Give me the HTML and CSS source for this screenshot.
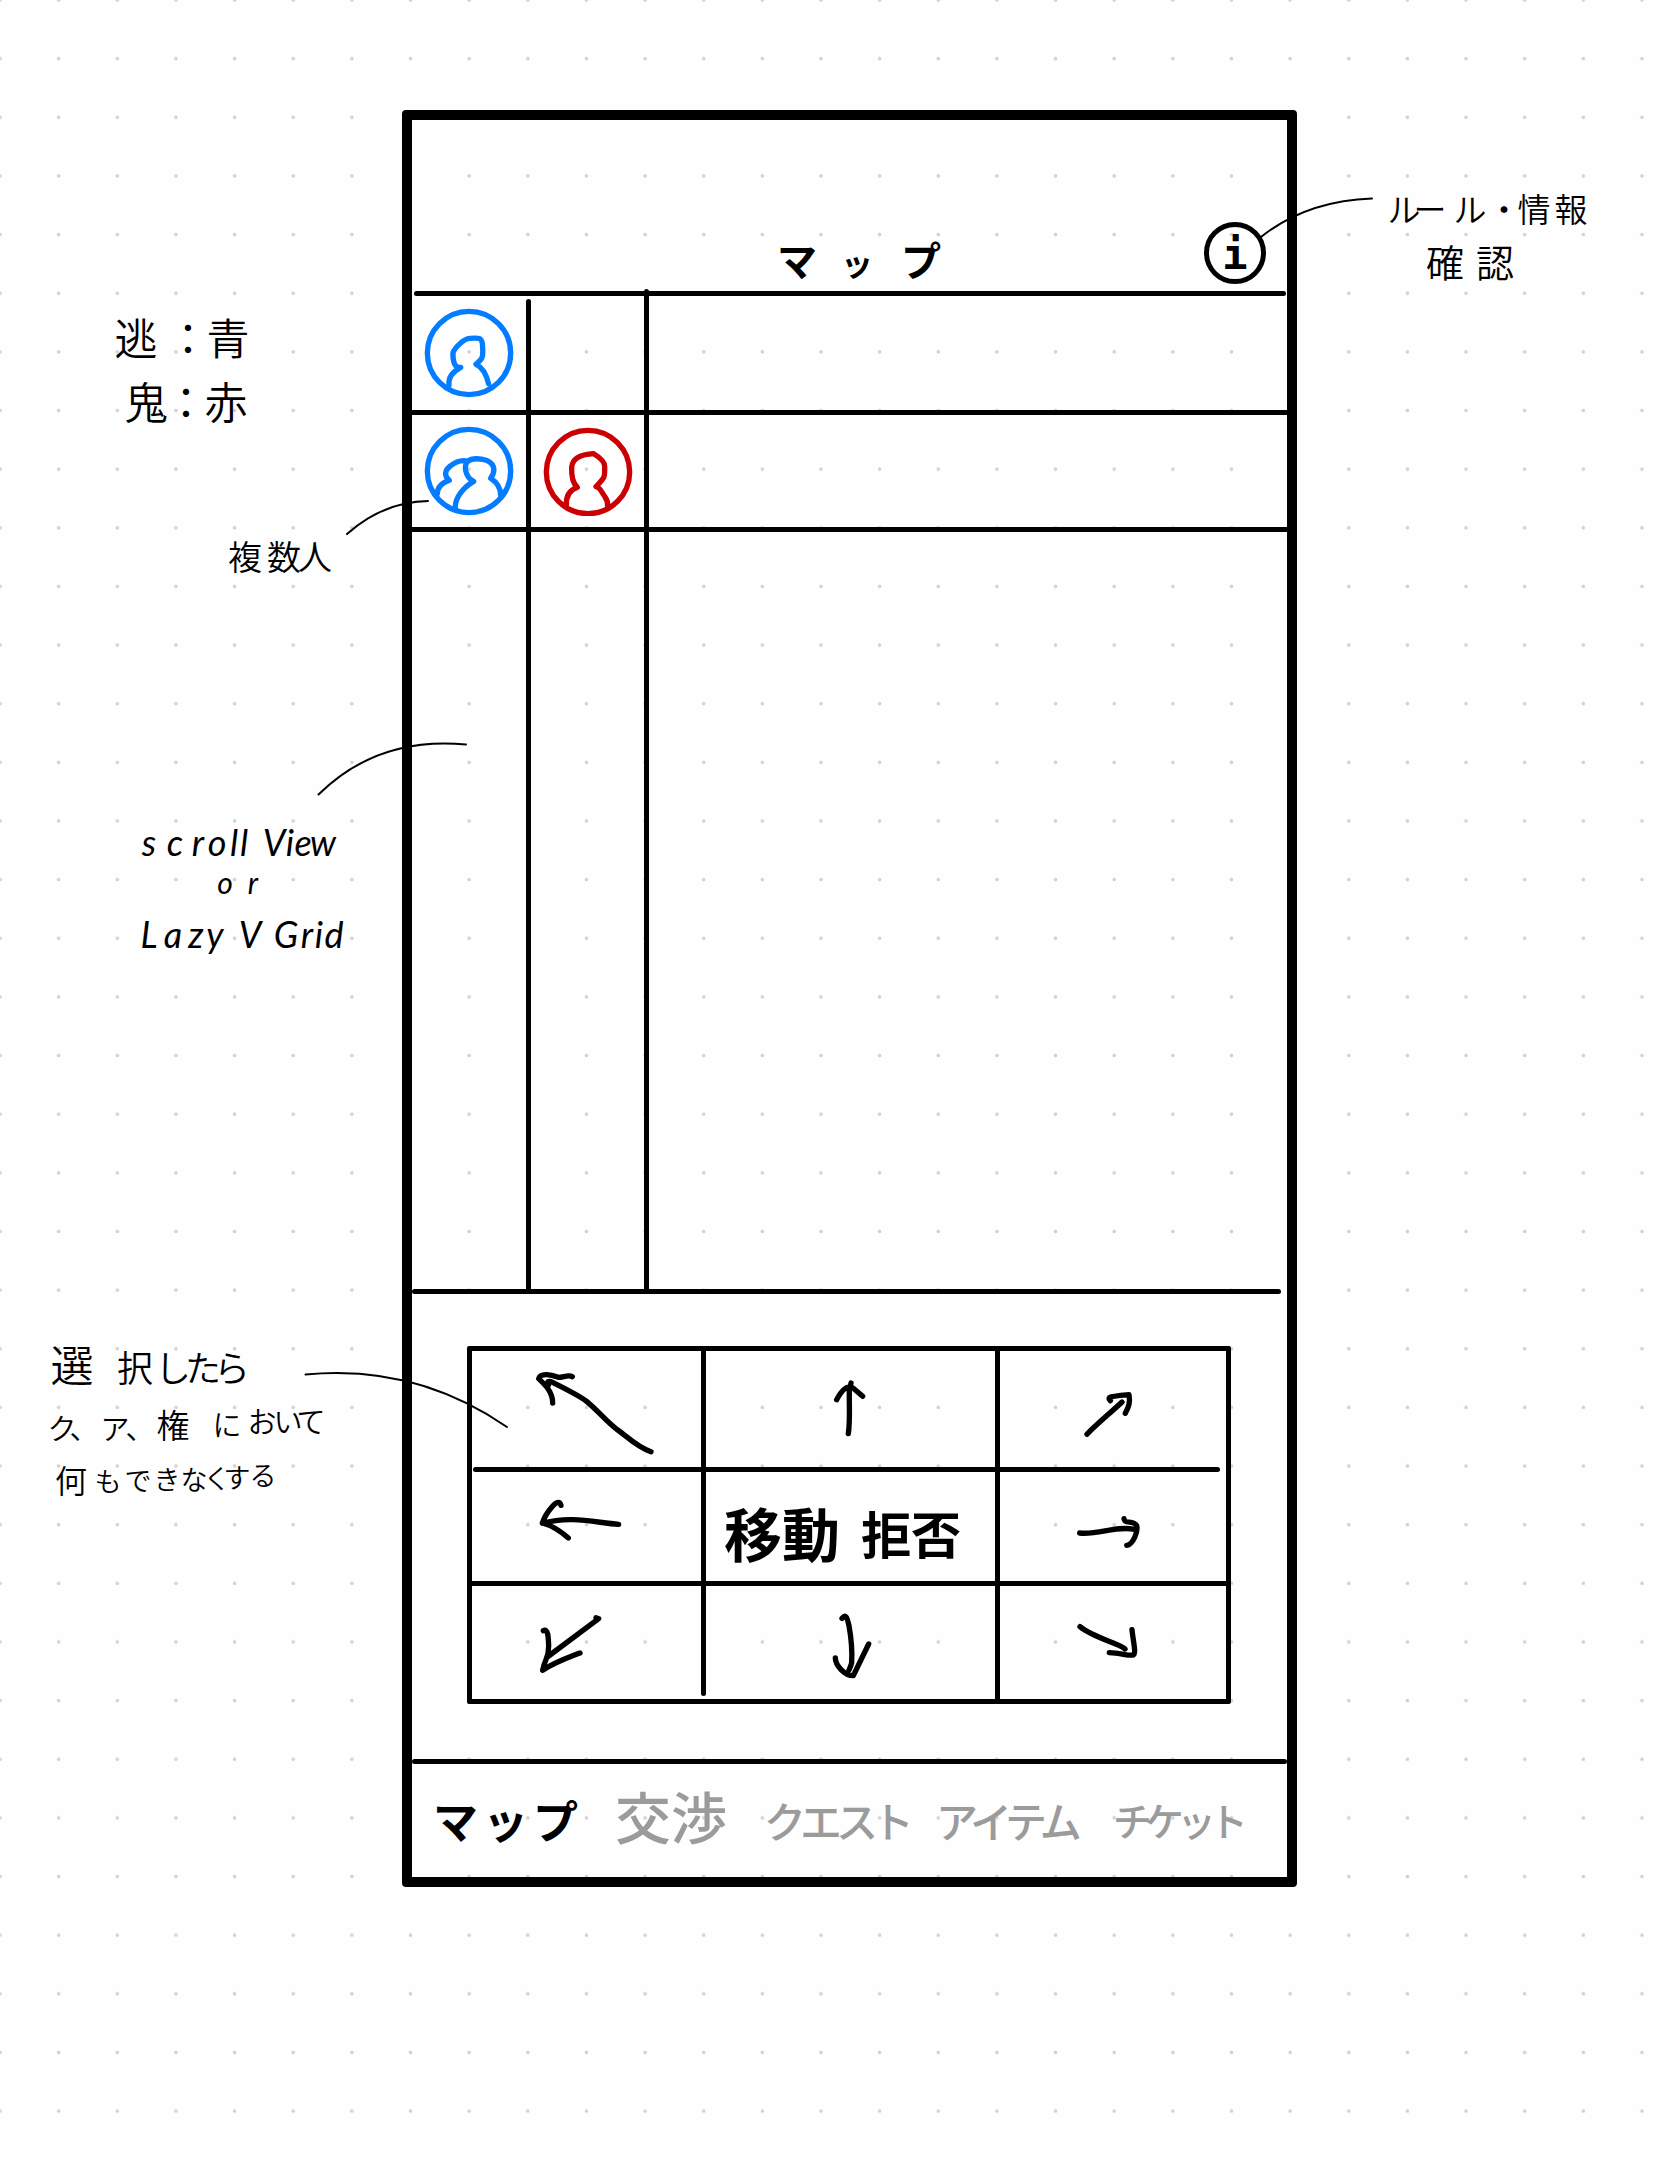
FILE: index.html
```html
<!DOCTYPE html>
<html lang="ja">
<head>
<meta charset="utf-8">
<title>マップ</title>
<link rel="stylesheet" href="styles.css">
</head>
<body>
<main class="canvas">
  <section class="phone">
    <header class="header">
      <h1 class="title">マ<span class="small-tsu">ッ</span>プ</h1>
      <span class="info"><span class="info-mark">i</span></span>
    </header>
    <div class="rule rule-header"></div>

    <div class="map">
      <div class="cell cell-a1">
        <svg class="avatar blue" viewBox="133 656 270 270"><circle cx="268" cy="791" r="125"/><path d="M208 887C205 862 223 845 243 834C224 838 219 814 220 790C225 776 252 748 270 747C300 744 309 744 309 777C311 807 306 810 289 825C309 834 321 858 327 884"/></svg>
      </div>
      <div class="cell cell-a2">
        <svg class="avatar blue" viewBox="133 1008 270 270"><circle cx="268" cy="1143" r="125"/><path d="M173 1212C172 1190 190 1178 209 1171C191 1157 197 1139 212 1128C226 1116 243 1109 264 1113M227 1255C225 1226 249 1193 282 1174C254 1160 253 1125 264 1114C276 1104 292 1105 309 1108C345 1115 350 1141 333 1165C353 1178 363 1195 363 1216"/></svg>
      </div>
      <div class="cell cell-b2">
        <svg class="avatar red" viewBox="486 1010 270 270"><circle cx="621" cy="1148" r="125"/><path d="M556 1249C554 1219 567 1202 589 1194C574 1181 571 1158 572 1133C575 1105 602 1095 638 1093C653 1102 671 1115 671 1131C672 1166 671 1165 645 1192C659 1194 663 1212 671 1221C679 1232 681 1241 680 1252"/></svg>
      </div>
      <i class="row-line row-1"></i>
      <i class="row-line row-2"></i>
      <i class="col-line col-1"></i>
      <i class="col-line col-2"></i>
    </div>
    <div class="rule rule-map"></div>

    <div class="controls">
      <div class="pad">
        <svg class="arrow p11" viewBox="96 243 687 348"><path d="M633 545C588 530 557 495 528 476C499 454 470 418 437 392C412 374 347 342 331 334C320 333 322 341 325 345M338 399C338 366 317 346 296 326C301 307 334 314 355 322C370 322 386 313 397 320"/></svg>
        <svg class="arrow p12" viewBox="798 243 867 348"><path d="M1225 491C1231 450 1227 400 1228 361L1233 339M1190 389C1204 363 1220 343 1239 354L1268 379"/></svg>
        <svg class="arrow p13" viewBox="480 243 678 348"><path d="M741 493C760 471 819 422 846 396M811 392C798 380 816 379 867 374C871 396 867 409 856 430"/></svg>
        <svg class="arrow p21" viewBox="96 606 687 327"><path d="M536 763C470 759 395 735 307 760M363 706C355 675 315 734 307 759C338 767 362 784 385 804"/></svg>
        <div class="refuse p22"><span class="refuse-a">移動</span><span class="refuse-b">拒否</span></div>
        <svg class="arrow p23" viewBox="480 606 678 327"><path d="M719 789C777 795 826 766 884 778M852 746C854 765 879 748 890 767C895 784 879 824 860 826"/></svg>
        <svg class="arrow p31" viewBox="96 948 687 339"><path d="M468 1043L476 1046L322 1161M310 1082C325 1074 325 1105 326 1128C326 1167 316 1161 308 1201C345 1176 387 1162 420 1149"/></svg>
        <svg class="arrow p32" viewBox="798 948 867 339"><path d="M1206 1045C1219 1028 1222 1048 1227 1067C1233 1100 1237 1140 1235 1178C1234 1185 1230 1193 1227 1200M1186 1164C1186 1184 1212 1217 1240 1217L1286 1122"/></svg>
        <svg class="arrow p33" viewBox="480 948 678 339"><path d="M720 1070C760 1103 843 1123 855 1137M876 1079C880 1118 889 1149 880 1155C866 1158 842 1149 808 1148"/></svg>
        <i class="pad-line h1"></i>
        <i class="pad-line h2"></i>
        <i class="pad-line v1"></i>
        <i class="pad-line v2"></i>
      </div>
    </div>
    <div class="rule rule-tabs"></div>

    <nav class="tabs">
      <span class="tab tab-map">マップ</span>
      <span class="tab tab-talk">交渉</span>
      <span class="tab tab-quest">クエスト</span>
      <span class="tab tab-item">アイテム</span>
      <span class="tab tab-ticket">チケット</span>
    </nav>
  </section>

  <svg class="notes" viewBox="0 0 1668 2157">
    <g class="leader">
      <path d="M1261 237Q1306 201 1372 198.500"/>
      <path d="M347 534Q383 502 428 501"/>
      <path d="M318.500 794.500Q378 736 466 744.500"/>
      <path d="M305.500 1374.500Q416 1364 507 1427"/>
    </g>
    <text class="n33" x="1404 1430 1470 1504 1534 1571" y="222">ルール・情報</text>
    <text class="n37" x="1445 1495" y="277">確認</text>
    <text class="n46" x="136 188 228" y="355">逃：青</text>
    <text class="n46" x="146 186 226" y="419">鬼：赤</text>
    <text class="n34" x="245 284 315" y="570">複数人</text>
    <text class="latin" x="149 175 198 217 234 244 258 274 290 303 323" y="856">scroll View</text>
    <text class="latin latin-or" x="225 253" y="894">or</text>
    <text class="latin" x="149 173 196 215 232 250 268 286 307 319 334" y="948">Lazy V Grid</text>
    <text class="n36" x="72 135 173 203 232" y="1382"><tspan class="n42">選</tspan>択したら</text>
    <text class="n29" x="62 84 115 140 173 200 227 262 288 311" y="1440 1440 1440 1440 1438 1438 1436 1433 1433 1433">ク、ア、<tspan class="n33">権</tspan> において</text>
    <text class="n27" x="71 108 138 167 194 217 237 263" y="1493 1492 1491 1490 1490 1489 1488 1486"><tspan class="n31">何</tspan>もできなくする</text>
  </svg>
</main>
</body>
</html>
```
FILE: styles.css
```css
* { box-sizing: border-box; }

body {
  margin: 0;
  background: #fefefe;
  color: #000;
  font-family: "Noto Sans CJK JP", sans-serif;
}

.canvas {
  position: relative;
  width: 1668px;
  height: 2157px;
  padding: 110px 0 0 402px;
  overflow: hidden;
  background-image: radial-gradient(circle, #d2d2d2 0, #d2d2d2 1.4px, transparent 2.2px);
  background-size: 58.65px 58.65px;
  background-position: -29.3px -29.3px;
}

.phone {
  display: flex;
  flex-direction: column;
  width: 895px;
  height: 1777px;
  border: 10px solid #000;
  border-radius: 4px;
}

.header {
  display: flex;
  flex: none;
  align-items: flex-end;
  justify-content: space-between;
  height: 171px;
  padding: 0 21px 7px 365px;
}

.title {
  margin: 0;
  font-size: 40px;
  font-weight: 700;
  line-height: 44px;
  letter-spacing: 22px;
}

.small-tsu {
  margin: 0 6px 0 2px;
  font-size: 32px;
}

.info {
  display: flex;
  align-items: center;
  justify-content: center;
  width: 62px;
  height: 62px;
  border: 5px solid #000;
  border-radius: 50%;
}

.info-mark {
  padding-top: 4px;
  font: 700 42px/50px "DejaVu Sans Mono", monospace;
}

.rule {
  flex: none;
  height: 5px;
  border-radius: 3px;
  background: #000;
}

.rule-header { margin: 0 1px 0 2px; }
.rule-map { margin-right: 6px; }

.map {
  display: grid;
  flex: none;
  grid-template-columns: 114px 5px 113px 5px 1fr;
  grid-template-rows: 114px 5px 112px 5px 757px;
}

.cell {
  display: flex;
  align-items: center;
  justify-content: center;
}

.cell-a1 { grid-area: 1 / 1; }
.cell-a2 { grid-area: 3 / 1; }
.cell-b2 { grid-area: 3 / 3; }

.avatar {
  width: 90px;
  height: 90px;
  fill: none;
  stroke-width: 16;
  stroke-linecap: round;
  stroke-linejoin: round;
}

.blue { stroke: #037cff; }
.red { stroke: #cc0003; }

.row-line, .col-line, .pad-line { background: #000; }

.row-1 { grid-area: 2 / 1 / 3 / 6; }
.row-2 { grid-area: 4 / 1 / 5 / 6; }
.col-1 { grid-area: 1 / 2 / 6 / 3; margin-top: 3px; border-radius: 3px 3px 0 0; }
.col-2 { grid-area: 1 / 4 / 6 / 5; margin-top: -7px; border-radius: 3px 3px 0 0; }

.controls {
  flex: none;
  height: 465px;
  padding: 52px 56px 0 55px;
}

.pad {
  display: grid;
  grid-template-columns: 229px 5px 289px 5px 226px;
  grid-template-rows: 116px 5px 109px 5px 113px;
  height: 358px;
  border: 5px solid #000;
  border-radius: 2px;
}

.arrow {
  width: 100%;
  height: 100%;
  fill: none;
  stroke: #000;
  stroke-width: 16;
  stroke-linecap: round;
  stroke-linejoin: round;
}

.p11 { grid-area: 1 / 1; }
.p12 { grid-area: 1 / 3; }
.p13 { grid-area: 1 / 5; }
.p21 { grid-area: 3 / 1; }
.p22 { grid-area: 3 / 3; }
.p23 { grid-area: 3 / 5; }
.p31 { grid-area: 5 / 1; }
.p32 { grid-area: 5 / 3; }
.p33 { grid-area: 5 / 5; }

.h1 { grid-area: 2 / 1 / 3 / 6; margin: 0 6px 0 1px; border-radius: 3px; }
.h2 { grid-area: 4 / 1 / 5 / 6; }
.v1 { grid-area: 1 / 2 / 6 / 3; margin-bottom: 3px; border-radius: 0 0 3px 3px; }
.v2 { grid-area: 1 / 4 / 6 / 5; }

.refuse {
  display: flex;
  align-items: center;
  gap: 21px;
  padding: 10px 0 0 18px;
  font-weight: 700;
  line-height: 1;
}

.refuse-a { font-size: 58px; }
.refuse-b { font-size: 50px; }

.tabs {
  display: flex;
  flex: 1;
  align-items: center;
  padding: 0 0 2px 21px;
  color: #9b9b9b;
  font-weight: 500;
  line-height: 1;
  white-space: nowrap;
}

.tab { flex: none; }

.tab-map { width: 182px; color: #000; font-size: 45px; font-weight: 700; letter-spacing: 5px; }
.tab-talk { width: 149px; padding-bottom: 10px; font-size: 56px; }
.tab-quest { width: 172px; font-size: 42px; letter-spacing: -6px; }
.tab-item { width: 177px; font-size: 42px; letter-spacing: -6px; }
.tab-ticket { font-size: 39px; letter-spacing: -7px; }

.notes {
  position: absolute;
  inset: 0;
  width: 1668px;
  height: 2157px;
  pointer-events: none;
}

.leader {
  fill: none;
  stroke: #000;
  stroke-width: 2;
  stroke-linecap: round;
}

.notes text {
  font-weight: 350;
  text-anchor: middle;
}

.n27 { font-size: 27px; }
.n29 { font-size: 29px; }
.n31 { font-size: 32px; }
.n33 { font-size: 33px; }
.n34 { font-size: 34px; }
.n36 { font-size: 36px; }
.n37 { font-size: 38px; }
.n42 { font-size: 43px; }
.n46 { font-size: 43px; }
.notes .latin { font: italic 400 36px Lato, sans-serif; }
.notes .latin-or { font-size: 30px; }
```
